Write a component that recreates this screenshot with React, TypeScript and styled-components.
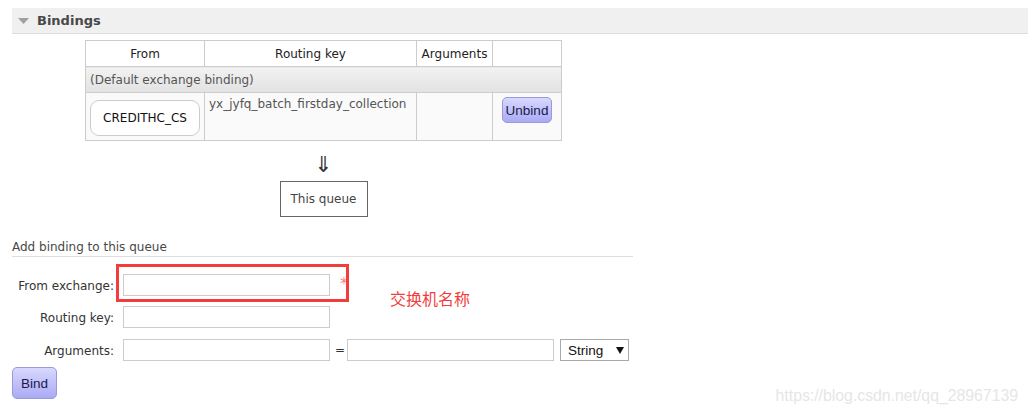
import React from "react";
import styled, { createGlobalStyle } from "styled-components";

const Global = createGlobalStyle`
  html, body { margin: 0; padding: 0; background: #fff; }
  body { font-family: "DejaVu Sans", Verdana, sans-serif; font-size: 12px; color: #484848; }
`;

const Page = styled.div`
  position: relative;
  width: 1028px;
  height: 413px;
  padding: 8px 0 0 12px;
  box-sizing: border-box;
  overflow: hidden;
`;

const SectionHeader = styled.div`
  display: flex;
  align-items: center;
  height: 25px;
  background: #f0f0f0;
  border-bottom: 1px solid #dcdcdc;
  padding-left: 6px;
  gap: 8px;
  font-weight: bold;
  font-size: 13px;
  color: #484848;
`;

const TableWrap = styled.div`
  margin: 6px 0 0 73px;
  width: 477px;
  display: flex;
  flex-direction: column;
  align-items: center;
`;

const Table = styled.table`
  border-collapse: collapse;
  td, th {
    border: 1px solid #cccccc;
  }
`;

const Th = styled.th<{ w: number }>`
  width: ${(p) => p.w}px;
  height: 25px;
  padding: 0;
  font-weight: normal;
  color: #222;
  text-align: center;
  background: #fff;
`;

const GroupRow = styled.tr`
  td {
    height: 25px;
    padding: 0 4px;
    color: #555;
    background: linear-gradient(#f2f2f2, #e2e2e2);
  }
`;

const DataCell = styled.td<{ center?: boolean }>`
  height: 43px;
  padding: 4px 4px 0 4px;
  vertical-align: ${(p) => (p.center ? "middle" : "top")};
  text-align: ${(p) => (p.center ? "center" : "left")};
  background: #fafafa;
  color: #555;
`;

const ExchangeBox = styled.div`
  width: 108px;
  height: 34px;
  margin: -2px auto 0;
  border: 1px solid #cccccc;
  border-radius: 9px;
  background: #fff;
  display: flex;
  align-items: center;
  justify-content: center;
  color: #111;
`;

const Button = styled.button<{ h: number; px: number }>`
  font-family: "Liberation Sans", Arial, sans-serif;
  font-size: 13.5px;
  color: #1a1a4a;
  height: ${(p) => p.h}px;
  padding: 0 ${(p) => p.px}px;
  border: 1px solid #9999dd;
  border-radius: 5px;
  background: linear-gradient(#d8d8ff, #aaaaf5);
  cursor: pointer;
`;

const ButtonCell = styled(DataCell)`
  vertical-align: top;
  text-align: center;
  padding: 4px 0 0 0;
`;

const Arrow = styled.div`
  margin-top: 13px;
  font-size: 22px;
  line-height: 22px;
  color: #333;
`;

const QueueBox = styled.div`
  margin-top: 5px;
  width: 86px;
  height: 34px;
  border: 1px solid #666;
  display: flex;
  align-items: center;
  justify-content: center;
  color: #444;
`;

const SubHeading = styled.div`
  margin-top: 23px;
  width: 621px;
  padding-bottom: 2px;
  border-bottom: 1px solid #dddddd;
  color: #484848;
`;

const Form = styled.div`
  margin-top: 17px;
  display: flex;
  flex-direction: column;
  gap: 10px;
`;

const Row = styled.div`
  display: flex;
  align-items: center;
  gap: 9px;
`;

const Label = styled.label`
  width: 102px;
  text-align: right;
  color: #333;
  padding-top: 2px;
`;

const Input = styled.input`
  width: 207px;
  height: 22px;
  box-sizing: border-box;
  border: 1px solid #cccccc;
  margin: 0;
  padding: 0 3px;
`;

const Required = styled.span`
  color: #ff8080;
  font-size: 16px;
  line-height: 16px;
  margin-left: 1px;
  margin-top: -2px;
`;

const Equals = styled.span`
  width: 7px;
  margin: 0 -4px;
  text-align: center;
  color: #333;
`;

const Select = styled.div`
  width: 69px;
  height: 22px;
  margin-left: -3px;
  box-sizing: border-box;
  border: 1px solid #aaaaaa;
  display: flex;
  align-items: center;
  justify-content: space-between;
  padding: 0 4px 0 7px;
  font-family: "Liberation Sans", Arial, sans-serif;
  font-size: 13.5px;
  color: #111;
`;

const BindRow = styled.div`
  margin-top: 6px;
`;

const Annotation = styled.div`
  position: absolute;
  left: 116px;
  top: 264px;
  width: 233px;
  height: 38px;
  box-sizing: border-box;
  border: 3px solid #f33d3d;
  pointer-events: none;
`;

const Note = styled.div`
  position: absolute;
  left: 390px;
  top: 286px;
  font-family: "Noto Sans CJK SC", sans-serif;
  font-size: 16px;
  color: #f33d3d;
`;

const Watermark = styled.div`
  position: absolute;
  right: 10px;
  bottom: 8px;
  font-family: "Liberation Sans", Arial, sans-serif;
  font-size: 15.8px;
  color: #e6e6e6;
`;

export default function App() {
  return (
    <>
      <Global />
      <Page>
        <SectionHeader>
          <svg width="11" height="6" viewBox="0 0 11 6">
            <polygon points="0,0 11,0 5.5,6" fill="#a0a0a0" />
          </svg>
          <span>Bindings</span>
        </SectionHeader>
        <TableWrap>
          <Table>
            <thead>
              <tr>
                <Th w={118}>From</Th>
                <Th w={211}>Routing key</Th>
                <Th w={75}>Arguments</Th>
                <Th w={68}></Th>
              </tr>
            </thead>
            <tbody>
              <GroupRow>
                <td colSpan={4}>(Default exchange binding)</td>
              </GroupRow>
              <tr>
                <DataCell center>
                  <ExchangeBox>CREDITHC_CS</ExchangeBox>
                </DataCell>
                <DataCell>yx_jyfq_batch_firstday_collection</DataCell>
                <DataCell></DataCell>
                <ButtonCell>
                  <Button h={26} px={3}>Unbind</Button>
                </ButtonCell>
              </tr>
            </tbody>
          </Table>
          <Arrow>⇓</Arrow>
          <QueueBox>This queue</QueueBox>
        </TableWrap>
        <SubHeading>Add binding to this queue</SubHeading>
        <Form>
          <Row>
            <Label>From exchange:</Label>
            <Input />
            <Required>*</Required>
          </Row>
          <Row>
            <Label>Routing key:</Label>
            <Input />
          </Row>
          <Row style={{ marginTop: 1 }}>
            <Label>Arguments:</Label>
            <Input />
            <Equals>=</Equals>
            <Input />
            <Select>
              <span>String</span>
              <svg width="8" height="7" viewBox="0 0 8 7">
                <polygon points="0,0 8,0 4,7" fill="#111" />
              </svg>
            </Select>
          </Row>
        </Form>
        <BindRow>
          <Button h={32} px={8}>Bind</Button>
        </BindRow>
        <Annotation />
        <Note>交换机名称</Note>
        <Watermark>https://blog.csdn.net/qq_28967139</Watermark>
      </Page>
    </>
  );
}
